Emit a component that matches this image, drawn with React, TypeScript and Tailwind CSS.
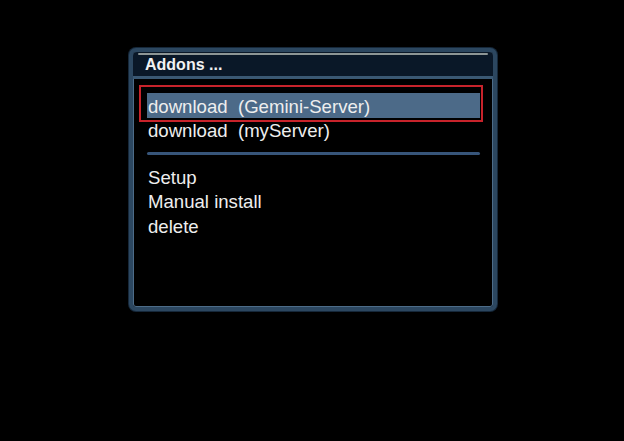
const ITEMS = ['Setup', 'Manual install', 'delete']

export default function App() {
    return (
        <div className="w-[624px] h-[441px] bg-black pt-[48px] pl-[129px] font-['Liberation_Sans',Arial,sans-serif]">
            <div className="w-[368px] h-[263px] rounded-[7px] border-[4px] border-[#2c4760] bg-black flex flex-col shadow-[inset_0_0_0_1px_#4d6c88,0_0_0_1px_#16283a]">
                {/* title bar */}
                <div className="h-[24px] bg-[#0a1828] rounded-t-[4px] flex flex-col">
                    <div className="mx-[5px] mt-[1px] h-[2px] bg-[#8d9696] rounded-full" />
                    <div className="pl-[12px] text-[16px] leading-[19px] font-bold text-[#f2f2f2]">Addons ...</div>
                </div>
                <div className="h-[3px] bg-[#3a5873]" />

                {/* menu */}
                <div className="relative flex-1 pl-[14px] pr-[13px] pt-[14px] text-[18.6px] text-[#eeeeee]">
                    <div className="h-[25px] leading-[27px] pl-px bg-[#4c6a88]">download&nbsp; (Gemini-Server)</div>
                    <div className="h-[24px] leading-[25px] pl-px">download&nbsp; (myServer)</div>
                    <div className="mt-[10px] h-[3px] rounded-full bg-[#37557a]" />
                    <div className="mt-[11px]">
                        {ITEMS.map((item) => (
                            <div key={item} className="h-[24.3px] leading-[24px] pl-px">{item}</div>
                        ))}
                    </div>
                    {/* focus frame */}
                    <div className="absolute left-[6px] top-[6px] w-[344px] h-[37px] border-2 border-[#c8232b]" />
                </div>
            </div>
        </div>
    )
}
